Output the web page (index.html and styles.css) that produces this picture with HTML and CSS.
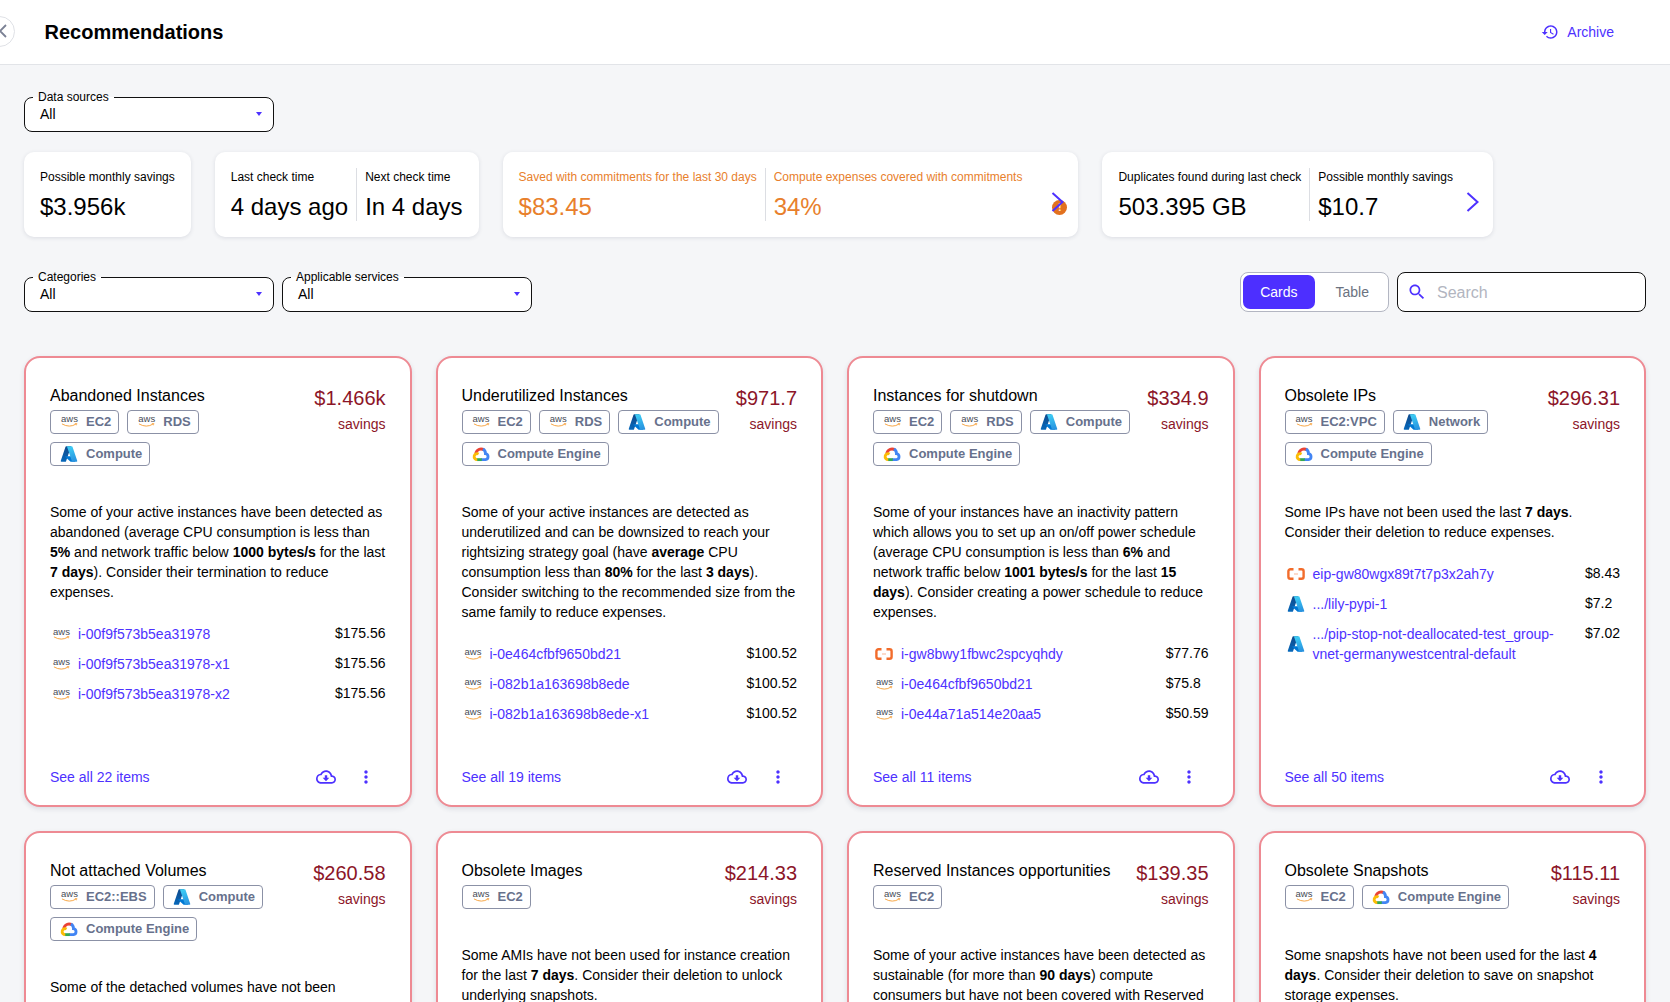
FILE: index.html
```html
<!DOCTYPE html>
<html lang="en">
  <head>
    <meta charset="UTF-8" />
    <title>Recommendations</title>
    <link rel="stylesheet" href="styles.css">
  </head>

  <body>
    <svg class="sprite" aria-hidden="true">
      <defs>
        <linearGradient id="az-a" x1="46" y1="12" x2="12" y2="90" gradientUnits="userSpaceOnUse">
          <stop offset="0" stop-color="#114a8b" />
          <stop offset="1" stop-color="#0669bc" />
        </linearGradient>
        <linearGradient id="az-b" x1="52" y1="12" x2="78" y2="86" gradientUnits="userSpaceOnUse">
          <stop offset="0" stop-color="#3ccbf4" />
          <stop offset="1" stop-color="#2892df" />
        </linearGradient>
      </defs>
      <symbol id="i-smile" viewBox="0 0 18 5">
        <path d="M1 .8Q9 5.4 16 .9" fill="none" stroke="#f7a13c" stroke-width="1" />
        <path d="M14.6 .5l2.2-.2-.5 2" fill="none" stroke="#f7a13c" stroke-width=".8" />
      </symbol>
      <symbol id="i-azure" viewBox="0 4 96 88">
        <path fill="url(#az-a)" d="M33.34 6.54h26.04L32.35 86.63a4.15 4.15 0 0 1-3.94 2.83H8.15a4.15 4.15 0 0 1-3.93-5.48L29.4 9.37a4.15 4.15 0 0 1 3.94-2.83z" />
        <path fill="#0078d4" d="M71.17 60.26H29.88a1.91 1.91 0 0 0-1.3 3.31l26.53 24.76a4.17 4.17 0 0 0 2.85 1.12h23.38z" />
        <path fill="url(#az-b)" d="M66.6 9.36a4.14 4.14 0 0 0-3.93-2.82H33.65a4.15 4.15 0 0 1 3.93 2.82l25.18 74.62a4.15 4.15 0 0 1-3.93 5.48h29.02a4.15 4.15 0 0 0 3.93-5.48z" />
      </symbol>
      <symbol id="i-gcp" viewBox="0 0 24 20">
        <g fill="none" stroke-width="3.8">
          <path stroke="#ea4335" d="M5 9.6A7 7 0 0 1 16 4.6" />
          <path stroke="#4285f4" d="M14.6 3.4A7 7 0 0 1 18 9.6A4 4 0 0 1 18 17.5H12" />
          <path stroke="#34a853" d="M13 17.5H6" />
          <path stroke="#fbbc05" d="M7 17.5A4 4 0 1 1 8.8 10" />
        </g>
      </symbol>
      <symbol id="i-ali" viewBox="0 0 18 12">
        <path d="M6.5 1.3H3.4a2 2 0 0 0-2 2v5.4a2 2 0 0 0 2 2h3.1M11.5 1.3h3.1a2 2 0 0 1 2 2v5.4a2 2 0 0 1-2 2h-3.1" fill="none" stroke="#f26c2b" stroke-width="2.4" />
        <path d="M7 6h4" stroke="#f9b595" stroke-width="1" />
      </symbol>
      <symbol id="i-cloud" viewBox="0 0 24 24">
        <path d="M19.35 10.04C18.67 6.59 15.64 4 12 4 9.11 4 6.6 5.64 5.35 8.04 2.34 8.36 0 10.91 0 14c0 3.31 2.69 6 6 6h13c2.76 0 5-2.24 5-5 0-2.64-2.05-4.78-4.65-4.96zM19 18H6c-2.21 0-4-1.79-4-4 0-2.05 1.53-3.76 3.56-3.97l1.07-.11.5-.95C8.08 7.14 9.94 6 12 6c2.62 0 4.88 1.86 5.39 4.43l.3 1.5 1.53.11c1.56.1 2.78 1.41 2.78 2.96 0 1.65-1.35 3-3 3zm-5.55-8h-2.9v3H8l4 4 4-4h-2.55z" />
      </symbol>
      <symbol id="i-more" viewBox="0 0 24 24">
        <path d="M12 8c1.1 0 2-.9 2-2s-.9-2-2-2-2 .9-2 2 .9 2 2 2zm0 2c-1.1 0-2 .9-2 2s.9 2 2 2 2-.9 2-2-.9-2-2-2zm0 6c-1.1 0-2 .9-2 2s.9 2 2 2 2-.9 2-2-.9-2-2-2z" />
      </symbol>
      <symbol id="i-chevron" viewBox="0 0 13 20">
        <path d="M1.5 1l10 9-10 9" fill="none" stroke="currentColor" stroke-width="2" />
      </symbol>
    </svg>

    <header class="top-bar">
      <button class="back-btn" type="button" aria-label="Back">
        <svg viewBox="0 0 8 14" width="8" height="14"><path d="M7 1L1 7l6 6" fill="none" stroke="#7b8194" stroke-width="1.8" /></svg>
      </button>
      <h1>Recommendations</h1>
      <a class="archive" href="#">
        <svg viewBox="0 0 24 24" width="18" height="18"><path d="M13 3c-4.97 0-9 4.03-9 9H1l3.89 3.89.07.14L9 12H6c0-3.87 3.13-7 7-7s7 3.13 7 7-3.13 7-7 7c-1.93 0-3.68-.79-4.94-2.06l-1.42 1.42C8.27 19.99 10.51 21 13 21c4.97 0 9-4.03 9-9s-4.03-9-9-9zm-1 5v5l4.28 2.54.72-1.21-3.5-2.08V8H12z" /></svg>
        Archive
      </a>
    </header>

    <main class="content">
      <div class="field">
        <span class="field-label">Data sources</span>
        <span>All</span>
        <i class="caret"></i>
      </div>

      <section class="stats">
        <div class="stat">
          <div class="stat-part">
            <div class="stat-label">Possible monthly savings</div>
            <div class="stat-value">$3.956k</div>
          </div>
        </div>
        <div class="stat">
          <div class="stat-part">
            <div class="stat-label">Last check time</div>
            <div class="stat-value">4 days ago</div>
          </div>
          <div class="stat-part">
            <div class="stat-label">Next check time</div>
            <div class="stat-value">In 4 days</div>
          </div>
        </div>
        <div class="stat stat-warn">
          <div class="stat-part">
            <div class="stat-label">Saved with commitments for the last 30 days</div>
            <div class="stat-value">$83.45</div>
          </div>
          <div class="stat-part">
            <div class="stat-label">Compute expenses covered with commitments</div>
            <div class="stat-value">34%</div>
          </div>
          <div class="stat-arrow">
            <span class="warn-dot">!</span>
            <svg width="13" height="20"><use href="#i-chevron" /></svg>
          </div>
        </div>
        <div class="stat">
          <div class="stat-part">
            <div class="stat-label">Duplicates found during last check</div>
            <div class="stat-value">503.395 GB</div>
          </div>
          <div class="stat-part">
            <div class="stat-label">Possible monthly savings</div>
            <div class="stat-value">$10.7</div>
          </div>
          <div class="stat-arrow">
            <svg width="13" height="20"><use href="#i-chevron" /></svg>
          </div>
        </div>
      </section>

      <section class="filters">
        <div class="field">
          <span class="field-label">Categories</span>
          <span>All</span>
          <i class="caret"></i>
        </div>
        <div class="field">
          <span class="field-label">Applicable services</span>
          <span>All</span>
          <i class="caret"></i>
        </div>
        <div class="filters-right">
          <div class="toggle">
            <button class="toggle-btn active" type="button">Cards</button>
            <button class="toggle-btn" type="button">Table</button>
          </div>
          <label class="search">
            <svg viewBox="0 0 24 24" width="20" height="20"><path d="M15.5 14h-.79l-.28-.27C15.41 12.59 16 11.11 16 9.5 16 5.91 13.09 3 9.5 3S3 5.91 3 9.5 5.91 16 9.5 16c1.61 0 3.09-.59 4.23-1.57l.27.28v.79l5 4.99L20.49 19l-4.99-5zm-6 0C7.01 14 5 11.99 5 9.5S7.01 5 9.5 5 14 7.01 14 9.5 11.99 14 9.5 14z" /></svg>
            <input type="text" placeholder="Search" />
          </label>
        </div>
      </section>

      <section class="cards">
        <article class="card">
          <div class="card-head">
            <div class="card-info">
              <div class="card-title">Abandoned Instances</div>
              <div class="chips">
                <span class="chip"><span class="aws">aws<svg><use href="#i-smile" /></svg></span>EC2</span>
                <span class="chip"><span class="aws">aws<svg><use href="#i-smile" /></svg></span>RDS</span>
                <span class="chip"><svg><use href="#i-azure" /></svg>Compute</span>
              </div>
            </div>
            <div class="card-saving">
              <div class="amount">$1.466k</div>
              <div class="saving-label">savings</div>
            </div>
          </div>
          <p class="card-text">Some of your active instances have been detected as abandoned (average CPU consumption is less than <b>5%</b> and network traffic below <b>1000 bytes/s</b> for the last <b>7 days</b>). Consider their termination to reduce expenses.</p>
          <div class="items">
            <span class="aws item-icon">aws<svg><use href="#i-smile" /></svg></span><a href="#">i-00f9f573b5ea31978</a><span class="item-cost">$175.56</span>
            <span class="aws item-icon">aws<svg><use href="#i-smile" /></svg></span><a href="#">i-00f9f573b5ea31978-x1</a><span class="item-cost">$175.56</span>
            <span class="aws item-icon">aws<svg><use href="#i-smile" /></svg></span><a href="#">i-00f9f573b5ea31978-x2</a><span class="item-cost">$175.56</span>
          </div>
          <div class="card-foot">
            <a href="#">See all 22 items</a>
            <svg class="foot-cloud"><use href="#i-cloud" /></svg>
            <svg class="foot-more"><use href="#i-more" /></svg>
          </div>
        </article>

        <article class="card">
          <div class="card-head">
            <div class="card-info">
              <div class="card-title">Underutilized Instances</div>
              <div class="chips">
                <span class="chip"><span class="aws">aws<svg><use href="#i-smile" /></svg></span>EC2</span>
                <span class="chip"><span class="aws">aws<svg><use href="#i-smile" /></svg></span>RDS</span>
                <span class="chip"><svg><use href="#i-azure" /></svg>Compute</span>
                <span class="chip"><svg><use href="#i-gcp" /></svg>Compute Engine</span>
              </div>
            </div>
            <div class="card-saving">
              <div class="amount">$971.7</div>
              <div class="saving-label">savings</div>
            </div>
          </div>
          <p class="card-text">Some of your active instances are detected as underutilized and can be downsized to reach your rightsizing strategy goal (have <b>average</b> CPU consumption less than <b>80%</b> for the last <b>3 days</b>). Consider switching to the recommended size from the same family to reduce expenses.</p>
          <div class="items">
            <span class="aws item-icon">aws<svg><use href="#i-smile" /></svg></span><a href="#">i-0e464cfbf9650bd21</a><span class="item-cost">$100.52</span>
            <span class="aws item-icon">aws<svg><use href="#i-smile" /></svg></span><a href="#">i-082b1a163698b8ede</a><span class="item-cost">$100.52</span>
            <span class="aws item-icon">aws<svg><use href="#i-smile" /></svg></span><a href="#">i-082b1a163698b8ede-x1</a><span class="item-cost">$100.52</span>
          </div>
          <div class="card-foot">
            <a href="#">See all 19 items</a>
            <svg class="foot-cloud"><use href="#i-cloud" /></svg>
            <svg class="foot-more"><use href="#i-more" /></svg>
          </div>
        </article>

        <article class="card">
          <div class="card-head">
            <div class="card-info">
              <div class="card-title">Instances for shutdown</div>
              <div class="chips">
                <span class="chip"><span class="aws">aws<svg><use href="#i-smile" /></svg></span>EC2</span>
                <span class="chip"><span class="aws">aws<svg><use href="#i-smile" /></svg></span>RDS</span>
                <span class="chip"><svg><use href="#i-azure" /></svg>Compute</span>
                <span class="chip"><svg><use href="#i-gcp" /></svg>Compute Engine</span>
              </div>
            </div>
            <div class="card-saving">
              <div class="amount">$334.9</div>
              <div class="saving-label">savings</div>
            </div>
          </div>
          <p class="card-text">Some of your instances have an inactivity pattern which allows you to set up an on/off power schedule (average CPU consumption is less than <b>6%</b> and network traffic below <b>1001 bytes/s</b> for the last <b>15 days</b>). Consider creating a power schedule to reduce expenses.</p>
          <div class="items">
            <svg class="item-icon"><use href="#i-ali" /></svg><a href="#">i-gw8bwy1fbwc2spcyqhdy</a><span class="item-cost">$77.76</span>
            <span class="aws item-icon">aws<svg><use href="#i-smile" /></svg></span><a href="#">i-0e464cfbf9650bd21</a><span class="item-cost">$75.8</span>
            <span class="aws item-icon">aws<svg><use href="#i-smile" /></svg></span><a href="#">i-0e44a71a514e20aa5</a><span class="item-cost">$50.59</span>
          </div>
          <div class="card-foot">
            <a href="#">See all 11 items</a>
            <svg class="foot-cloud"><use href="#i-cloud" /></svg>
            <svg class="foot-more"><use href="#i-more" /></svg>
          </div>
        </article>

        <article class="card">
          <div class="card-head">
            <div class="card-info">
              <div class="card-title">Obsolete IPs</div>
              <div class="chips">
                <span class="chip"><span class="aws">aws<svg><use href="#i-smile" /></svg></span>EC2:VPC</span>
                <span class="chip"><svg><use href="#i-azure" /></svg>Network</span>
                <span class="chip"><svg><use href="#i-gcp" /></svg>Compute Engine</span>
              </div>
            </div>
            <div class="card-saving">
              <div class="amount">$296.31</div>
              <div class="saving-label">savings</div>
            </div>
          </div>
          <p class="card-text">Some IPs have not been used the last <b>7 days</b>. Consider their deletion to reduce expenses.</p>
          <div class="items">
            <svg class="item-icon"><use href="#i-ali" /></svg><a href="#">eip-gw80wgx89t7t7p3x2ah7y</a><span class="item-cost">$8.43</span>
            <svg class="item-icon"><use href="#i-azure" /></svg><a href="#">.../lily-pypi-1</a><span class="item-cost">$7.2</span>
            <svg class="item-icon"><use href="#i-azure" /></svg><a href="#">.../pip-stop-not-deallocated-test_group-vnet-germanywestcentral-default</a><span class="item-cost">$7.02</span>
          </div>
          <div class="card-foot">
            <a href="#">See all 50 items</a>
            <svg class="foot-cloud"><use href="#i-cloud" /></svg>
            <svg class="foot-more"><use href="#i-more" /></svg>
          </div>
        </article>

        <article class="card">
          <div class="card-head">
            <div class="card-info">
              <div class="card-title">Not attached Volumes</div>
              <div class="chips">
                <span class="chip"><span class="aws">aws<svg><use href="#i-smile" /></svg></span>EC2::EBS</span>
                <span class="chip"><svg><use href="#i-azure" /></svg>Compute</span>
                <span class="chip"><svg><use href="#i-gcp" /></svg>Compute Engine</span>
              </div>
            </div>
            <div class="card-saving">
              <div class="amount">$260.58</div>
              <div class="saving-label">savings</div>
            </div>
          </div>
          <p class="card-text">Some of the detached volumes have not been</p>
        </article>

        <article class="card">
          <div class="card-head">
            <div class="card-info">
              <div class="card-title">Obsolete Images</div>
              <div class="chips">
                <span class="chip"><span class="aws">aws<svg><use href="#i-smile" /></svg></span>EC2</span>
              </div>
            </div>
            <div class="card-saving">
              <div class="amount">$214.33</div>
              <div class="saving-label">savings</div>
            </div>
          </div>
          <p class="card-text">Some AMIs have not been used for instance creation for the last <b>7 days</b>. Consider their deletion to unlock underlying snapshots.</p>
        </article>

        <article class="card">
          <div class="card-head">
            <div class="card-info">
              <div class="card-title">Reserved Instances opportunities</div>
              <div class="chips">
                <span class="chip"><span class="aws">aws<svg><use href="#i-smile" /></svg></span>EC2</span>
              </div>
            </div>
            <div class="card-saving">
              <div class="amount">$139.35</div>
              <div class="saving-label">savings</div>
            </div>
          </div>
          <p class="card-text">Some of your active instances have been detected as sustainable (for more than <b>90 days</b>) compute consumers but have not been covered with Reserved</p>
        </article>

        <article class="card">
          <div class="card-head">
            <div class="card-info">
              <div class="card-title">Obsolete Snapshots</div>
              <div class="chips">
                <span class="chip"><span class="aws">aws<svg><use href="#i-smile" /></svg></span>EC2</span>
                <span class="chip"><svg><use href="#i-gcp" /></svg>Compute Engine</span>
              </div>
            </div>
            <div class="card-saving">
              <div class="amount">$115.11</div>
              <div class="saving-label">savings</div>
            </div>
          </div>
          <p class="card-text">Some snapshots have not been used for the last <b>4 days</b>. Consider their deletion to save on snapshot storage expenses.</p>
        </article>
      </section>
    </main>
  </body>
</html>
```

FILE: styles.css
```css
html,
body {
  height: 1002px;
  overflow: hidden;
}

body {
  margin: 0;
  font-family: "Liberation Sans", Arial, sans-serif;
  font-size: 14px;
  background-color: #f5f6f8;
  color: #000;
}

a {
  color: #4d31ff;
  text-decoration: none;
}

.sprite {
  display: block;
  width: 0;
  height: 0;
}

.aws {
  display: flex;
  flex-direction: column;
  flex: none;
  width: 18px;
  padding-left: 1px;
  box-sizing: border-box;
  color: #474c57;
  font-size: 9.5px;
  font-weight: 400;
  line-height: 7px;
}

.aws svg {
  display: block;
  width: 17px;
  height: 5px;
  margin-top: 1px;
}

.top-bar {
  display: flex;
  align-items: center;
  height: 65px;
  box-sizing: border-box;
  background: #fff;
  border-bottom: 1px solid #e2e4e8;
}

.back-btn {
  display: flex;
  align-items: center;
  justify-content: flex-end;
  flex: none;
  width: 31px;
  height: 31px;
  margin: -2px 0 0 -16px;
  padding: 0 7px 0 0;
  border: 1px solid #dfe1e6;
  border-radius: 50%;
  background: #fff;
}

h1 {
  margin: 0 0 0 29.5px;
  font-size: 20px;
  font-weight: 700;
}

.archive {
  display: flex;
  align-items: center;
  gap: 8px;
  margin-left: auto;
  margin-right: 56px;
}

.archive svg {
  fill: #4d31ff;
}

.content {
  padding: 32px 24px 0;
}

.field {
  position: relative;
  display: flex;
  align-items: center;
  width: 250px;
  height: 35px;
  box-sizing: border-box;
  padding: 0 15px 2px;
  background: #fff;
  border: 1px solid #111;
  border-radius: 8px;
}

.field-label {
  position: absolute;
  top: -8px;
  left: 8px;
  padding: 0 5px;
  font-size: 12px;
  line-height: 14px;
  background: linear-gradient(#f5f6f8 50%, #fff 50%);
}

.caret {
  margin-left: auto;
  margin-right: -4px;
  border-left: 3.5px solid transparent;
  border-right: 3.5px solid transparent;
  border-top: 4px solid #4d31ff;
}

.stats {
  display: flex;
  gap: 24px;
  margin-top: 20px;
}

.stat {
  display: flex;
  height: 85px;
  box-sizing: border-box;
  padding: 16px;
  background: #fff;
  border-radius: 10px;
  box-shadow: 0 1px 4px rgba(30, 40, 70, 0.12);
}

.stat-part {
  height: 53px;
}

.stat-part + .stat-part {
  padding-left: 8px;
  margin-left: 8px;
  border-left: 1px solid #dcdee3;
}

.stat-label {
  font-size: 12px;
  line-height: 18px;
  white-space: nowrap;
}

.stat-value {
  margin-top: 7px;
  font-size: 24px;
  line-height: 28px;
  white-space: nowrap;
}

.stat-warn {
  color: #e8802c;
}

.stat-arrow {
  position: relative;
  align-self: flex-end;
  margin: 0 -2px 9px 13px;
  height: 20px;
  color: #4d31ff;
}

.stat-arrow svg {
  position: relative;
}

.stat-warn .stat-arrow {
  margin-left: 29px;
}

.warn-dot {
  position: absolute;
  left: 1px;
  top: 8px;
  width: 15px;
  height: 15px;
  border-radius: 50%;
  background: #e2711f;
  color: #fde6d4;
  font-size: 11px;
  font-weight: 700;
  line-height: 15px;
  text-align: center;
}

.filters {
  display: flex;
  align-items: flex-end;
  gap: 8px;
  margin-top: 35px;
}

.filters-right {
  display: flex;
  gap: 8px;
  margin-left: auto;
}

.toggle {
  display: flex;
  gap: 4px;
  height: 40px;
  box-sizing: border-box;
  padding: 2px;
  border: 1px solid #b3b6c2;
  border-radius: 8px;
  background: #fff;
}

.toggle-btn {
  padding: 0 17px;
  border: none;
  border-radius: 7px;
  background: none;
  color: #6b7280;
  font-family: inherit;
  font-size: 14px;
}

.toggle-btn.active {
  background-color: #4d2fff;
  color: #fff;
}

.search {
  display: flex;
  align-items: center;
  gap: 10px;
  width: 249px;
  height: 40px;
  box-sizing: border-box;
  padding: 0 10px 0 9px;
  background: #fff;
  border: 1px solid #111;
  border-radius: 8px;
}

.search svg {
  flex: none;
  fill: #4d31ff;
}

.search input {
  flex: 1;
  min-width: 0;
  padding: 1px 0 0;
  border: none;
  outline: none;
  font-family: inherit;
  font-size: 16px;
}

.search input::placeholder {
  color: #b2b5c0;
}

.cards {
  display: grid;
  grid-template-columns: repeat(4, 1fr);
  grid-auto-rows: 451px;
  gap: 24px;
  margin-top: 44px;
}

.card {
  display: flex;
  flex-direction: column;
  min-width: 0;
  box-sizing: border-box;
  padding: 28px 24px 16px;
  background: #fff;
  border: 2px solid #ee8a93;
  border-radius: 16px;
  box-shadow: 0 2px 5px rgba(30, 40, 70, 0.12);
}

.card-head {
  display: flex;
  gap: 16px;
}

.card-info {
  flex: 1;
  min-width: 0;
}

.card-title {
  font-size: 16px;
  line-height: 20px;
}

.chips {
  display: flex;
  flex-wrap: wrap;
  gap: 8px;
  margin-top: 4px;
}

.chip {
  display: flex;
  align-items: center;
  gap: 8px;
  height: 24px;
  box-sizing: border-box;
  padding: 0 7px 2px 9px;
  border: 1px solid #8b91a6;
  border-radius: 4px;
  color: #67718c;
  font-size: 13px;
  font-weight: 700;
  white-space: nowrap;
}

.chip > svg {
  width: 18px;
  height: 18px;
  margin-top: 2px;
}

.card-saving {
  flex: none;
  text-align: right;
  color: #8c1528;
}

.amount {
  font-size: 20px;
  line-height: 24px;
}

.saving-label {
  margin-top: 4px;
  line-height: 20px;
}

.card-text {
  margin: 36px 0 0;
  line-height: 20px;
}

.items {
  display: grid;
  grid-template-columns: 28px 1fr auto;
  gap: 10px 0;
  align-items: start;
  margin-top: 22px;
  line-height: 20px;
}

.item-icon {
  align-self: center;
  width: 18px;
  height: 18px;
  margin-left: 2px;
}

.item-icon.aws {
  height: auto;
}

.item-cost {
  margin-top: -1px;
  padding-left: 24px;
}

.card-foot {
  display: flex;
  align-items: center;
  margin-top: auto;
  height: 24px;
}

.foot-cloud {
  width: 20px;
  height: 20px;
  margin-left: auto;
  fill: #4d31ff;
}

.foot-more {
  width: 20px;
  height: 20px;
  margin-left: 20.5px;
  margin-right: 9.5px;
  fill: #4d31ff;
}
```
